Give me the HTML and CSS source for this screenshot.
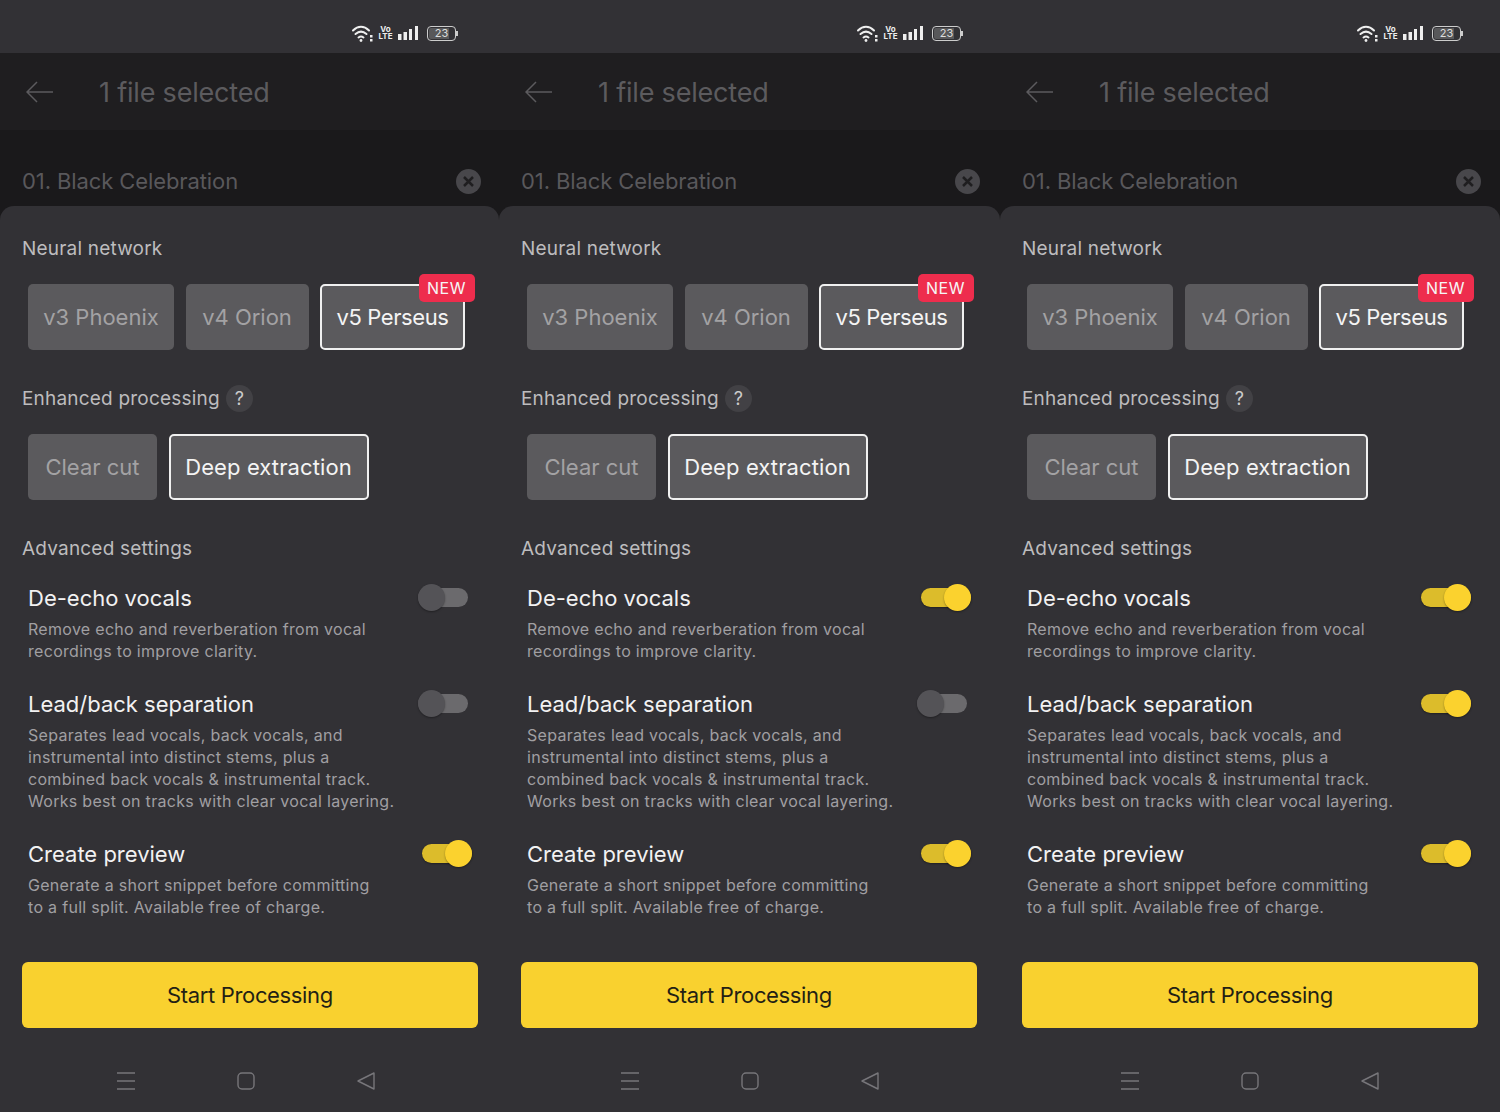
FILE: index.html
```html
<!DOCTYPE html>
<html lang="en">
<head>
  <meta charset="UTF-8">
  <title>Processing options</title>
  <link rel="stylesheet" href="styles.css">
</head>
<body>
<!-- Shared icons -->
<svg class="icon-defs" aria-hidden="true">
  <symbol id="i-wifi" viewBox="0 0 21 17">
    <g fill="none" stroke="#eee" stroke-width="2" stroke-linecap="round">
      <path d="M1 5.500c5-5 11-5 16 0"/>
      <path d="M3.500 9c3.500-3 7.500-3 11 0"/>
      <path d="M6.500 12.500c2-1.500 3-1.500 5 0"/>
    </g>
    <circle cx="9" cy="15.500" r="1.400" fill="#eee"/>
    <rect x="18" y="10" width="2.500" height="2.500" fill="#eee"/>
    <rect x="18" y="14" width="2.500" height="2.500" fill="#eee"/>
  </symbol>
  <symbol id="i-bars" viewBox="0 0 20 14">
    <rect x="0" y="8" width="3.500" height="6" fill="#eee"/>
    <rect x="5.500" y="6" width="3.500" height="8" fill="#eee"/>
    <rect x="11" y="3" width="3" height="11" fill="#eee"/>
    <rect x="17" y="0" width="3" height="14" fill="#eee"/>
  </symbol>
  <symbol id="i-back" viewBox="0 0 28 22">
    <path d="M27 11H1M11 1L1 11l10 10" fill="none" stroke="#5c5b5e" stroke-width="1.500"/>
  </symbol>
  <symbol id="i-close" viewBox="0 0 13 13">
    <path d="M2 2l9 9M11 2l-9 9" stroke="#1f1e20" stroke-width="2.500"/>
  </symbol>
  <symbol id="i-menu" viewBox="0 0 18 18">
    <path d="M0 1h18M0 9h18M0 17h18" stroke="#77767a" stroke-width="1.300"/>
  </symbol>
  <symbol id="i-home" viewBox="0 0 18 18">
    <rect x="1" y="1" width="16" height="16" rx="4" fill="none" stroke="#77767a" stroke-width="1.400"/>
  </symbol>
  <symbol id="i-triangle" viewBox="0 0 18 18">
    <path d="M17 1v16L1 9z" fill="none" stroke="#77767a" stroke-width="1.400" stroke-linejoin="round"/>
  </symbol>
</svg>

<div class="screens">

  <!-- Screen 1 -->
  <div class="phone phone-a">
    <div class="status-bar">
      <svg class="ic-wifi"><use href="#i-wifi"/></svg>
      <div class="volte"><span>Vo</span><span>LTE</span></div>
      <svg class="ic-bars"><use href="#i-bars"/></svg>
      <div class="battery">23</div>
    </div>
    <div class="app-bar">
      <svg class="ic-back"><use href="#i-back"/></svg>
      <span>1 file selected</span>
    </div>
    <div class="file-row">
      <span>01. Black Celebration</span>
      <div class="close"><svg class="ic-close"><use href="#i-close"/></svg></div>
    </div>
    <div class="sheet">
      <div class="label">Neural network</div>
      <div class="chips">
        <div class="chip chip-phoenix">v3 Phoenix</div>
        <div class="chip chip-orion">v4 Orion</div>
        <div class="chip chip-perseus selected">v5 Perseus<span class="badge">NEW</span></div>
      </div>
      <div class="label">Enhanced processing <span class="help">?</span></div>
      <div class="chips">
        <div class="chip chip-clear">Clear cut</div>
        <div class="chip chip-deep selected">Deep extraction</div>
      </div>
      <div class="label">Advanced settings</div>
      <div class="settings">
        <div class="setting">
          <h3>De-echo vocals</h3>
          <p>Remove echo and reverberation from vocal recordings to improve clarity.</p>
          <div class="toggle"><div class="track"></div><div class="thumb"></div></div>
        </div>
        <div class="setting">
          <h3>Lead/back separation</h3>
          <p>Separates lead vocals, back vocals, and instrumental into distinct stems, plus a combined back vocals &amp; instrumental track. Works best on tracks with clear vocal layering.</p>
          <div class="toggle"><div class="track"></div><div class="thumb"></div></div>
        </div>
        <div class="setting">
          <h3>Create preview</h3>
          <p>Generate a short snippet before committing to a full split. Available free of charge.</p>
          <div class="toggle on"><div class="track"></div><div class="thumb"></div></div>
        </div>
      </div>
      <button class="start">Start Processing</button>
      <div class="nav">
        <svg class="ic-nav"><use href="#i-menu"/></svg>
        <svg class="ic-nav"><use href="#i-home"/></svg>
        <svg class="ic-nav"><use href="#i-triangle"/></svg>
      </div>
    </div>
  </div>

  <!-- Screen 2 -->
  <div class="phone phone-b">
    <div class="status-bar">
      <svg class="ic-wifi"><use href="#i-wifi"/></svg>
      <div class="volte"><span>Vo</span><span>LTE</span></div>
      <svg class="ic-bars"><use href="#i-bars"/></svg>
      <div class="battery">23</div>
    </div>
    <div class="app-bar">
      <svg class="ic-back"><use href="#i-back"/></svg>
      <span>1 file selected</span>
    </div>
    <div class="file-row">
      <span>01. Black Celebration</span>
      <div class="close"><svg class="ic-close"><use href="#i-close"/></svg></div>
    </div>
    <div class="sheet">
      <div class="label">Neural network</div>
      <div class="chips">
        <div class="chip chip-phoenix">v3 Phoenix</div>
        <div class="chip chip-orion">v4 Orion</div>
        <div class="chip chip-perseus selected">v5 Perseus<span class="badge">NEW</span></div>
      </div>
      <div class="label">Enhanced processing <span class="help">?</span></div>
      <div class="chips">
        <div class="chip chip-clear">Clear cut</div>
        <div class="chip chip-deep selected">Deep extraction</div>
      </div>
      <div class="label">Advanced settings</div>
      <div class="settings">
        <div class="setting">
          <h3>De-echo vocals</h3>
          <p>Remove echo and reverberation from vocal recordings to improve clarity.</p>
          <div class="toggle on"><div class="track"></div><div class="thumb"></div></div>
        </div>
        <div class="setting">
          <h3>Lead/back separation</h3>
          <p>Separates lead vocals, back vocals, and instrumental into distinct stems, plus a combined back vocals &amp; instrumental track. Works best on tracks with clear vocal layering.</p>
          <div class="toggle"><div class="track"></div><div class="thumb"></div></div>
        </div>
        <div class="setting">
          <h3>Create preview</h3>
          <p>Generate a short snippet before committing to a full split. Available free of charge.</p>
          <div class="toggle on"><div class="track"></div><div class="thumb"></div></div>
        </div>
      </div>
      <button class="start">Start Processing</button>
      <div class="nav">
        <svg class="ic-nav"><use href="#i-menu"/></svg>
        <svg class="ic-nav"><use href="#i-home"/></svg>
        <svg class="ic-nav"><use href="#i-triangle"/></svg>
      </div>
    </div>
  </div>

  <!-- Screen 3 -->
  <div class="phone phone-c">
    <div class="status-bar">
      <svg class="ic-wifi"><use href="#i-wifi"/></svg>
      <div class="volte"><span>Vo</span><span>LTE</span></div>
      <svg class="ic-bars"><use href="#i-bars"/></svg>
      <div class="battery">23</div>
    </div>
    <div class="app-bar">
      <svg class="ic-back"><use href="#i-back"/></svg>
      <span>1 file selected</span>
    </div>
    <div class="file-row">
      <span>01. Black Celebration</span>
      <div class="close"><svg class="ic-close"><use href="#i-close"/></svg></div>
    </div>
    <div class="sheet">
      <div class="label">Neural network</div>
      <div class="chips">
        <div class="chip chip-phoenix">v3 Phoenix</div>
        <div class="chip chip-orion">v4 Orion</div>
        <div class="chip chip-perseus selected">v5 Perseus<span class="badge">NEW</span></div>
      </div>
      <div class="label">Enhanced processing <span class="help">?</span></div>
      <div class="chips">
        <div class="chip chip-clear">Clear cut</div>
        <div class="chip chip-deep selected">Deep extraction</div>
      </div>
      <div class="label">Advanced settings</div>
      <div class="settings">
        <div class="setting">
          <h3>De-echo vocals</h3>
          <p>Remove echo and reverberation from vocal recordings to improve clarity.</p>
          <div class="toggle on"><div class="track"></div><div class="thumb"></div></div>
        </div>
        <div class="setting">
          <h3>Lead/back separation</h3>
          <p>Separates lead vocals, back vocals, and instrumental into distinct stems, plus a combined back vocals &amp; instrumental track. Works best on tracks with clear vocal layering.</p>
          <div class="toggle on"><div class="track"></div><div class="thumb"></div></div>
        </div>
        <div class="setting">
          <h3>Create preview</h3>
          <p>Generate a short snippet before committing to a full split. Available free of charge.</p>
          <div class="toggle on"><div class="track"></div><div class="thumb"></div></div>
        </div>
      </div>
      <button class="start">Start Processing</button>
      <div class="nav">
        <svg class="ic-nav"><use href="#i-menu"/></svg>
        <svg class="ic-nav"><use href="#i-home"/></svg>
        <svg class="ic-nav"><use href="#i-triangle"/></svg>
      </div>
    </div>
  </div>

</div>
</body>
</html>
```

FILE: styles.css
```css
* {
  box-sizing: border-box;
}
body {
  margin: 0;
  background-color: #323135;
  font-family: Inter, Arial, sans-serif;
}
.icon-defs {
  display: none;
}
.screens {
  display: flex;
  height: 1112px;
  overflow: hidden;
}
.phone {
  width: 500px;
  height: 1112px;
  display: flex;
  flex-direction: column;
  background-color: #1a191b;
}
.phone-a {
  width: 499px;
}
.phone-b {
  width: 501px;
}

/* Status bar */
.status-bar {
  height: 53px;
  background-color: #323135;
  display: flex;
  align-items: center;
  justify-content: flex-end;
  gap: 7px;
  padding: 13px 39px 0 0;
}
.phone-a .status-bar {
  padding-right: 43px;
}
.ic-wifi {
  width: 21px;
  height: 17px;
}
.ic-bars {
  width: 20px;
  height: 14px;
}
.volte {
  display: flex;
  flex-direction: column;
  align-items: center;
  width: 11px;
  color: #eee;
  font-size: 8px;
  font-weight: 700;
  line-height: 7px;
}
.battery {
  width: 29px;
  height: 15px;
  margin-left: 2px;
  border: 1px solid #ccc;
  border-radius: 4px;
  background-image: linear-gradient(to right, #58585a 78%, transparent 78%);
  background-clip: content-box;
  padding: 1px;
  color: #ddd;
  font-size: 11px;
  line-height: 11px;
  text-align: center;
  position: relative;
}
.battery::after {
  content: "";
  position: absolute;
  right: -3px;
  top: 4px;
  width: 2px;
  height: 5px;
  background-color: #ccc;
}

/* Dimmed page behind the sheet */
.app-bar {
  height: 77px;
  background-color: #1f1e20;
  display: flex;
  align-items: center;
  padding: 1px 0 0 26px;
  gap: 45px;
  color: #5c5b5e;
  font-size: 27px;
  letter-spacing: -0.2px;
}
.ic-back {
  width: 28px;
  height: 22px;
}
.file-row {
  height: 76px;
  display: flex;
  align-items: center;
  justify-content: space-between;
  padding: 26px 18px 0 22px;
  color: #59585b;
  font-size: 22px;
  letter-spacing: -0.1px;
}
.phone-b .file-row {
  padding-right: 20px;
}
.phone-c .file-row {
  padding-right: 19px;
}
.close {
  width: 25px;
  height: 25px;
  border-radius: 50%;
  background-color: #48474b;
  display: flex;
  align-items: center;
  justify-content: center;
}
.ic-close {
  width: 13px;
  height: 13px;
}

/* Sheet */
.sheet {
  flex: 1;
  background-color: #323135;
  border-radius: 14px 14px 0 0;
  padding: 29px 22px 0;
}
.label {
  display: flex;
  align-items: center;
  gap: 6px;
  height: 26px;
  color: #bdbcbe;
  font-size: 19px;
  letter-spacing: 0.2px;
}
.help {
  width: 27px;
  height: 27px;
  border-radius: 50%;
  background-color: #424145;
  color: #ccc;
  font-size: 18px;
  text-align: center;
  line-height: 27px;
}
.chips {
  display: flex;
  gap: 11.5px;
  margin: 23px 0 35px 6px;
}
.phone-c .chips,
.phone-c .settings {
  margin-left: 5px;
}
.chip {
  height: 66px;
  border-radius: 5px;
  background-color: #5b5a5d;
  color: #a3a2a4;
  font-size: 22px;
  line-height: 66px;
  text-align: center;
  position: relative;
}
.chip.selected {
  border: 2px solid #f0f0f0;
  color: #f4f4f4;
  line-height: 62px;
}
.chip-phoenix {
  width: 146px;
}
.chip-orion {
  width: 123px;
}
.chip-perseus {
  width: 145px;
  letter-spacing: -0.4px;
}
.chip-clear {
  width: 129px;
}
.chip-deep {
  width: 200px;
  letter-spacing: 0.1px;
}
.badge {
  position: absolute;
  top: -12px;
  right: -12px;
  height: 28px;
  padding: 0 9px 0 8px;
  border-radius: 5px;
  background-color: #ee2d4d;
  color: #f6f6f6;
  font-size: 16px;
  letter-spacing: 0.5px;
  line-height: 28px;
}

/* Advanced settings */
.settings {
  margin: 22px 0 0 6px;
}
.setting {
  position: relative;
  margin-bottom: 27px;
}
.setting h3 {
  margin: 0 0 5px;
  height: 30px;
  color: #f2f2f2;
  font-size: 22px;
  font-weight: 400;
  line-height: 30px;
}
.setting p {
  margin: 0;
  width: 376px;
  color: #a09fa2;
  font-size: 16px;
  letter-spacing: 0.3px;
  line-height: 22px;
}
.setting:last-child p {
  width: 355px;
}
.toggle {
  position: absolute;
  top: 1px;
  left: 390px;
  width: 50px;
  height: 27px;
}
.toggle.on {
  left: 394px;
}
.track {
  position: absolute;
  top: 4px;
  left: 0;
  right: 0;
  height: 19px;
  border-radius: 10px;
  background-color: #6b6a6d;
}
.thumb {
  position: absolute;
  top: 0;
  left: 0;
  width: 27px;
  height: 27px;
  border-radius: 50%;
  background-color: #545357;
  box-shadow: 0 1px 2px rgba(0, 0, 0, 0.35);
}
.toggle.on .track {
  background-color: #dcbc2b;
  box-shadow: 0 1px 2px rgba(0, 0, 0, 0.35);
}
.toggle.on .thumb {
  left: 23px;
  background-color: #fbd22e;
}
.start {
  display: block;
  width: 456px;
  height: 66px;
  margin-top: 44px;
  border: none;
  border-radius: 6px;
  background-color: #f9d12f;
  color: #231f14;
  font-family: inherit;
  font-size: 22px;
  letter-spacing: -0.35px;
}

/* Android nav */
.nav {
  display: flex;
  gap: 102px;
  margin: 44px 0 0 95px;
}
.phone-b .nav {
  margin-left: 100px;
}
.phone-c .nav {
  margin-left: 99px;
}
.ic-nav {
  width: 18px;
  height: 18px;
}
```
